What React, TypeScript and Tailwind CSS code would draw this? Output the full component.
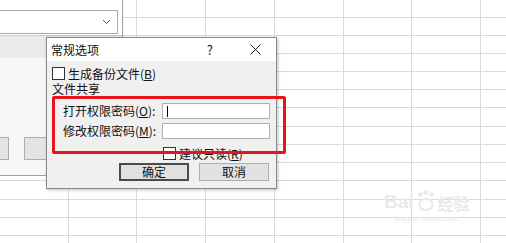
import React from "react";

const font = { fontFamily: '"Noto Sans CJK SC", "Noto Sans", sans-serif' };

const rows = Array.from({ length: 14 });
const cols = Array.from({ length: 8 });

function Sheet() {
  return (
    <div className="grid h-[243px] w-[506px] grid-cols-[69px_68px_69px_69px_69px_68px_69px_1fr] grid-rows-[18px_18px_18px_18px_18px_18px_19px_18px_18px_18px_19px_18px_18px_1fr] bg-white">
      {rows.map((_, r) =>
        cols.map((_, c) => (
          <div
            key={`${r}-${c}`}
            className={`border-[#dadada] ${r < 13 ? "border-b" : ""} ${c < 7 ? "border-r" : ""}`}
          />
        ))
      )}
    </div>
  );
}

function Check() {
  return <span className="inline-block h-[13px] w-[13px] shrink-0 border border-[#333] bg-white" />;
}

function SaveWindow() {
  return (
    <div className="absolute left-0 top-0 flex h-[176px] w-[123px] flex-col border-r border-b border-[#a0a0a0] bg-white">
      <div className="h-[36px] border-b border-[#c8c8c8] bg-white pt-[10px]">
        <div className="flex h-[24px] w-[118px] items-center justify-end border border-l-0 border-[#a8a8a8] bg-white pr-[6px]">
          <svg width="9" height="6" viewBox="0 0 9 6">
            <path d="M1 1l3.5 3.5L8 1" fill="none" stroke="#555" strokeWidth="1" />
          </svg>
        </div>
      </div>
      <div className="h-[22px] bg-[#ebebeb]" />
      <div className="flex-1 bg-[#f7f7f7] pt-[79px]">
        <div className="flex gap-[15px]">
          <div className="h-[23px] w-[9px] border border-l-0 border-[#adadad] bg-[#e4e4e4]" />
          <div className="h-[23px] w-[40px] border border-[#adadad] bg-[#e4e4e4]" />
        </div>
      </div>
    </div>
  );
}

function Dialog() {
  return (
    <div
      className="absolute left-[46px] top-[37px] flex h-[152px] w-[231px] flex-col border border-[#8a8a8a] bg-[#f0f0f0] text-[12px] leading-none text-[#111] shadow-[1px_1px_3px_rgba(0,0,0,0.25)]"
      style={font}
    >
      <div className="flex h-[23px] items-center bg-white pl-[4px]">
        <span>常规选项</span>
        <span className="ml-auto mr-[37px] text-[13px]">?</span>
        <svg className="mr-[15px]" width="11" height="11" viewBox="0 0 11 11">
          <path d="M0.5 0.5l10 10M10.5 0.5l-10 10" stroke="#222" strokeWidth="1" />
        </svg>
      </div>
      <div className="flex flex-col pl-[5px]">
        <div className="mt-[6px] flex items-center gap-[3px]">
          <Check />
          <span>
            生成备份文件(<u>B</u>)
          </span>
        </div>
        <div className="mt-[3px]">文件共享</div>
        <div className="mt-[8px] flex items-center">
          <span className="w-[110px] pl-[11px]">
            打开权限密码(<u>O</u>):
          </span>
          <div className="flex h-[16px] w-[108px] items-center border border-[#b0b0b0] bg-white pl-[4px]">
            <span className="h-[11px] w-px bg-black" />
          </div>
        </div>
        <div className="mt-[4px] flex items-center">
          <span className="w-[110px] pl-[11px]">
            修改权限密码(<u>M</u>):
          </span>
          <div className="h-[16px] w-[108px] border border-[#b0b0b0] bg-white" />
        </div>
        <div className="ml-[111px] mt-[8px] flex items-center gap-[3px]">
          <Check />
          <span>
            建议只读(<u>R</u>)
          </span>
        </div>
        <div className="ml-[67px] mt-[3px] flex gap-[10px]">
          <div className="flex h-[18px] w-[70px] items-center justify-center border-2 border-[#4a4a4a] bg-[#e1e1e1]">
            确定
          </div>
          <div className="flex h-[18px] w-[70px] items-center justify-center border border-[#adadad] bg-[#e1e1e1]">
            取消
          </div>
        </div>
      </div>
    </div>
  );
}

function Watermark() {
  return (
    <div className="absolute left-[384px] top-[189px] flex flex-col items-center text-[#e9e9e9]" style={font}>
      <div className="flex items-end gap-[2px]">
        <span className="text-[19px] font-bold leading-none" style={{ fontFamily: '"Liberation Sans", sans-serif' }}>
          Bai
        </span>
        <svg width="20" height="22" viewBox="0 0 18 20">
          <ellipse cx="9" cy="14" rx="6" ry="5" fill="none" stroke="#e9e9e9" strokeWidth="2" />
          <circle cx="4" cy="5" r="2" fill="#e9e9e9" />
          <circle cx="9" cy="3" r="2" fill="#e9e9e9" />
          <circle cx="14" cy="5" r="2" fill="#e9e9e9" />
        </svg>
        <span className="text-[16px] font-bold leading-none">经验</span>
      </div>
      <span className="mt-[4px] text-[8px] leading-none" style={{ fontFamily: '"Liberation Sans", sans-serif' }}>
        jingyan.baidu.com
      </span>
    </div>
  );
}

export default function App() {
  return (
    <div className="relative h-[243px] w-[506px] overflow-hidden bg-white">
      <Sheet />
      <Watermark />
      <SaveWindow />
      <Dialog />
      <div className="absolute left-[52px] top-[96px] h-[58px] w-[234px] rounded-[2px] border-[3px] border-[#e8141c]" />
    </div>
  );
}
